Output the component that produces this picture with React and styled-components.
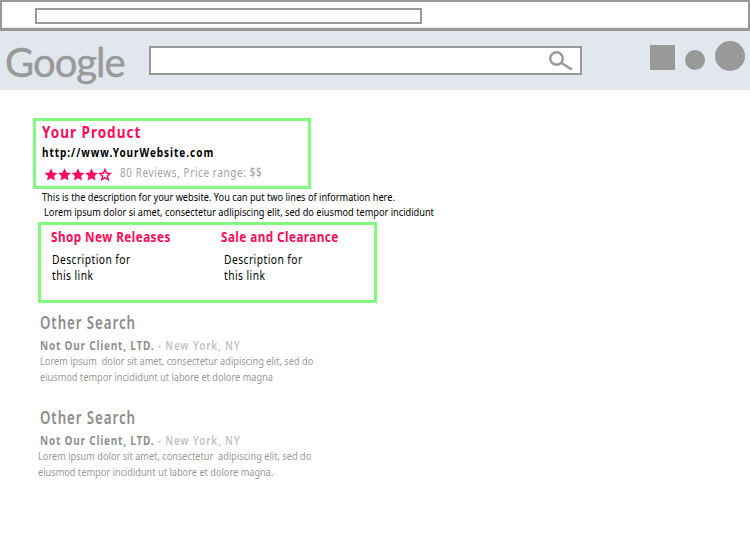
import React from "react";
import styled, { createGlobalStyle, css } from "styled-components";

const Global = createGlobalStyle`
  html, body { margin: 0; padding: 0; background: #fff; }
  body { font-family: "Noto Sans", "Open Sans", sans-serif; }
`;
const condensed = s => css`width: max-content; transform: scaleX(${s}); transform-origin: 0 0;`;

const Page = styled.div`width: 750px; height: 550px; overflow: hidden; display: flex; flex-direction: column;`;
const Chrome = styled.div`
  height: 31px; box-sizing: border-box; border: 2px solid #999; border-bottom-width: 3px;
  padding: 6px 0 0 33px; background: linear-gradient(#fff 25px, #e9ecf1 25px);
`;
const AddressBar = styled.div`width: 387px; height: 16px; box-sizing: border-box; border: 2px solid #999; background: #fff;`;
const Header = styled.header`height: 59px; background: #e2e6ed; display: flex; align-items: flex-start; position: relative;`;
const Logo = styled.div`
  width: 149px; padding: 7px 0 0 5px; box-sizing: border-box; font-family: "Lato", sans-serif; font-size: 40px;
  line-height: 48px; color: #999; letter-spacing: -1px; -webkit-text-stroke: .4px #999;
`;
const SearchBox = styled.div`
  width: 433px; height: 29px; margin-top: 15px; box-sizing: border-box; border: 2px solid #999; background: #fff;
  display: flex; justify-content: flex-end; align-items: center; padding-right: 7px;
`;
const Shapes = styled.div`margin-left: 68px; display: flex; align-items: flex-start; gap: 10px;`;
const Square = styled.div`width: 25px; height: 25px; margin-top: 14px; background: #999;`;
const Dot = styled.div`
  width: ${p => p.$size}px; height: ${p => p.$size}px; margin-top: ${p => p.$top}px; border-radius: 50%; background: #999;
`;
const Main = styled.main`padding: 28px 0 0 33px; display: flex; flex-direction: column; align-items: flex-start;`;
const Highlight = styled.section`
  box-sizing: border-box; border: 3px solid #80fc80; width: ${p => p.$w}px; height: ${p => p.$h}px;
`;
const ProductBox = styled(Highlight)`padding: 1px 0 0 6px; display: flex; flex-direction: column;`;
const ProductTitle = styled.h1`margin: 0; font-size: 16.5px; line-height: 20px; font-weight: 700; color: #ff0a5a; letter-spacing: 1.2px; ${condensed(.82)}`;
const Url = styled.div`font-size: 12.5px; font-weight: 700; line-height: 15px; margin-top: 3px; color: #000; letter-spacing: 1.2px; ${condensed(.8)}`;
const Rating = styled.div`display: flex; align-items: center; margin: 5px 0 0 2px; height: 16px;`;
const RatingText = styled.span`font-size: 12.5px; line-height: 16px; color: #a3a3a3; letter-spacing: .8px; ${condensed(.79)}`;
const Stars = styled.svg`width: 68px; height: 14px; margin: 4px 8px 0 0;`;
const Desc = styled.p`margin: ${p => p.$top}px 0 0 ${p => p.$left}px; font-size: 11.5px; line-height: 15px; color: #000; white-space: nowrap; ${condensed(.8)}`;
const LinksBox = styled(Highlight)`margin: 3px 0 0 5px; padding: 3px 0 0 10px; display: flex;`;
const LinkCol = styled.div`width: ${p => p.$w}px;`;
const LinkTitle = styled.h2`margin: 0; font-size: 14px; line-height: 18px; font-weight: 700; color: #ff0a5a; white-space: nowrap; letter-spacing: .5px; ${condensed(.84)}`;
const LinkText = styled.div`margin: 5px 0 0 ${p => p.$left}px; font-size: 11.7px; line-height: 16px; color: #000; letter-spacing: .5px; ${condensed(.88)}`;
const Result = styled.article`margin: ${p => p.$top}px 0 0 7px;`;
const ResultTitle = styled.h3`margin: 0; font-size: 17px; line-height: 20px; font-weight: 600; color: #8c8c8c; letter-spacing: 1.2px; ${condensed(.78)}`;
const Company = styled.div`margin-top: 6px; font-size: 12.5px; line-height: 14px; font-weight: 700; color: #8f8f8f; letter-spacing: 1px; ${condensed(.8)}`;
const Place = styled.span`font-weight: 600; color: #c4c4c4;`;
const Snippet = styled.p`margin: 0 0 0 ${p => p.$left}px; font-size: 11.5px; line-height: 15.5px; color: #999; white-space: nowrap; ${condensed(.8)}`;

const star = "M7 .2L8.88 4.41 13.47 4.9 10.04 7.99 11 12.5 7 10.2 3 12.5 3.96 7.99 .53 4.9 5.12 4.41z";

const App = () => (
  <Page>
    <Global />
    <Chrome><AddressBar /></Chrome>
    <Header>
      <Logo>Google</Logo>
      <SearchBox>
        <svg width="24" height="22" viewBox="0 0 24 22" fill="none" stroke="#999">
          <circle cx="7.5" cy="8.5" r="6.3" strokeWidth="2.4" />
          <path d="M12.5 13l10.5 6.5" strokeWidth="2.6" />
        </svg>
      </SearchBox>
      <Shapes>
        <Square />
        <Dot $size={20} $top={19} />
        <Dot $size={30} $top={10} />
      </Shapes>
    </Header>
    <Main>
      <ProductBox $w={278} $h={71}>
        <ProductTitle>Your Product</ProductTitle>
        <Url>http://www.YourWebsite.com</Url>
        <Rating>
          <Stars viewBox="0 0 68 14">
            {[0, 13.5, 27, 40.5].map(x => <path key={x} d={star} transform={`translate(${x} 0)`} fill="#ff0a5a" />)}
            <path d="M7 1.6L8.5 5.1 12.2 5.5 9.4 8 10.2 11.6 7 9.7 3.8 11.6 4.6 8 1.8 5.5 5.5 5.1z" transform="translate(54 0)" fill="none" stroke="#ff0a5a" strokeWidth="1.5" />
          </Stars>
          <RatingText>80 Reviews, Price range: $$</RatingText>
        </Rating>
      </ProductBox>
      <Desc $top={0} $left={9}>This is the description for your website. You can put two lines of information here.</Desc>
      <Desc $top={0} $left={11}>Lorem ipsum dolor si amet, consectetur adlipiscing elit, sed do eiusmod tempor incididunt</Desc>
      <LinksBox $w={339} $h={81}>
        <LinkCol $w={170}>
          <LinkTitle>Shop New Releases</LinkTitle>
          <LinkText $left={1}>Description for<br />this link</LinkText>
        </LinkCol>
        <LinkCol $w={150}>
          <LinkTitle>Sale and Clearance</LinkTitle>
          <LinkText $left={3}>Description for<br />this link</LinkText>
        </LinkCol>
      </LinksBox>
      <Result $top={10}>
        <ResultTitle>Other Search</ResultTitle>
        <Company>Not Our Client, LTD. <Place>- New York, NY</Place></Company>
        <Snippet $left={0}>Lorem ipsum&nbsp; dolor sit amet, consectetur adipiscing elit, sed do<br />eiusmod tempor incididunt ut labore et dolore magna</Snippet>
      </Result>
      <Result $top={24}>
        <ResultTitle>Other Search</ResultTitle>
        <Company>Not Our Client, LTD. <Place>- New York, NY</Place></Company>
        <Snippet $left={-2}>Lorem ipsum dolor sit amet, consectetur&nbsp; adipiscing elit, sed do<br />eiusmod tempor incididunt ut labore et dolore magna.</Snippet>
      </Result>
    </Main>
  </Page>
);
export default App;
